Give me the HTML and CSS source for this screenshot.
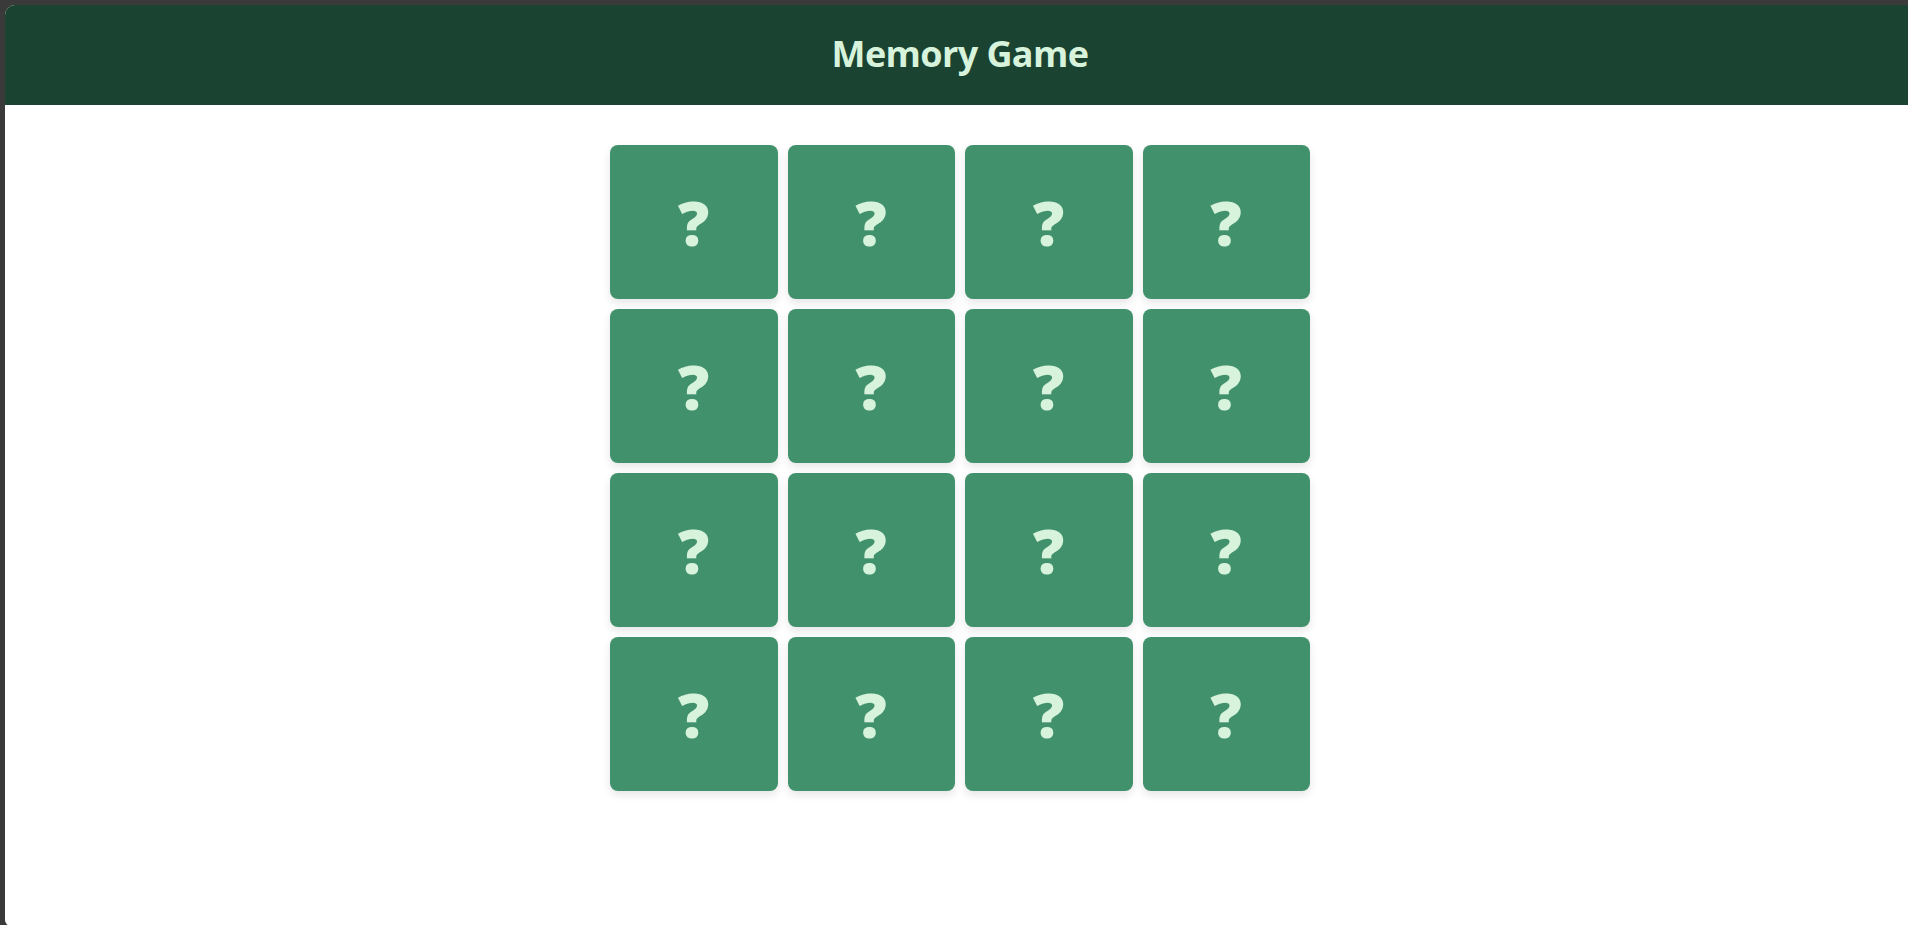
FILE: index.html
```html
<!DOCTYPE html>
<html lang="en">
<head>
<meta charset="utf-8">
<title>Memory Game</title>
<link rel="stylesheet" href="styles.css">
</head>
<body>
<div class="window">
  <header class="app-header">
    <h1 class="title">Memory Game</h1>
  </header>
  <main class="board">
    <div class="grid">
      <div class="card">?</div>
      <div class="card">?</div>
      <div class="card">?</div>
      <div class="card">?</div>
      <div class="card">?</div>
      <div class="card">?</div>
      <div class="card">?</div>
      <div class="card">?</div>
      <div class="card">?</div>
      <div class="card">?</div>
      <div class="card">?</div>
      <div class="card">?</div>
      <div class="card">?</div>
      <div class="card">?</div>
      <div class="card">?</div>
      <div class="card">?</div>
    </div>
  </main>
</div>
</body>
</html>
```

FILE: styles.css
```css
html, body {
  margin: 0;
  padding: 0;
  height: 100%;
  overflow: hidden;
}

body {
  background: #3a3a3a;
  padding: 5px 0 0 5px;
  box-sizing: border-box;
  font-family: "Open Sans", "Noto Sans", sans-serif;
}

.window {
  width: 1910px;
  height: 921px;
  background: #ffffff;
  border-radius: 10px 0 0 6px;
  overflow: hidden;
}

.app-header {
  height: 100px;
  background: #1b4332;
  display: flex;
  align-items: center;
  justify-content: center;
}

.title {
  margin: 0;
  color: #d8f3dc;
  font-size: 36px;
  font-weight: 700;
  letter-spacing: -0.6px;
  line-height: 1;
  padding-bottom: 3px;
}

.board {
  display: flex;
  justify-content: center;
  padding-top: 40px;
}

.grid {
  display: grid;
  grid-template-columns: repeat(4, 167.5px);
  grid-auto-rows: 154px;
  gap: 10px;
}

.card {
  background: #40916c;
  border-radius: 8px;
  box-shadow: 0 4px 8px rgba(0, 0, 0, 0.1);
  display: flex;
  align-items: center;
  justify-content: center;
  color: #d8f3dc;
  font-size: 62px;
  font-weight: 800;
  line-height: 1;
}
```
